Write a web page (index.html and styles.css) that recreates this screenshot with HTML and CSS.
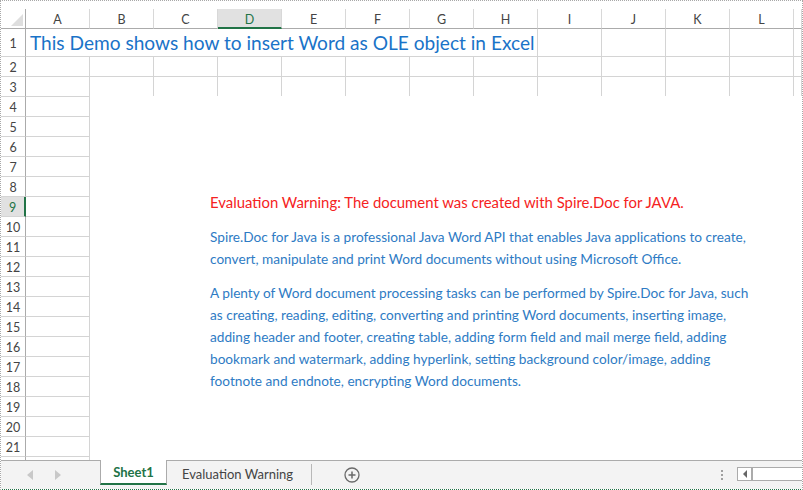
FILE: index.html
```html
<!DOCTYPE html>
<html>
<head>
<meta charset="utf-8">
<link rel="stylesheet" href="styles.css">
</head>
<body>
<div class="window">
  <div class="sheet">
    <div class="grid">
      <div class="corner"><span class="tri"></span></div>
      <div class="ch">A</div><div class="ch">B</div><div class="ch">C</div><div class="ch sel">D</div>
      <div class="ch">E</div><div class="ch">F</div><div class="ch">G</div><div class="ch">H</div>
      <div class="ch">I</div><div class="ch">J</div><div class="ch">K</div><div class="ch">L</div><div class="ch"></div>

      <div class="rh r1">1</div>
      <div class="c r1 title">This Demo shows how to insert Word as OLE object in Excel</div>
      <div class="c r1"></div><div class="c r1"></div><div class="c r1"></div><div class="c r1"></div><div class="c r1"></div>
    </div>
    <div class="grid rows" id="rows"></div>

    <div class="ole">
      <p class="warn">Evaluation Warning: The document was created with Spire.Doc for JAVA.</p>
      <p>Spire.Doc for Java is a professional Java Word API that enables Java applications to create,<br>convert, manipulate and print Word documents without using Microsoft Office.</p>
      <p>A plenty of Word document processing tasks can be performed by Spire.Doc for Java, such<br>as creating, reading, editing, converting and printing Word documents, inserting image,<br>adding header and footer, creating table, adding form field and mail merge field, adding<br>bookmark and watermark, adding hyperlink, setting background color/image, adding<br>footnote and endnote, encrypting Word documents.</p>
    </div>
  </div>

  <div class="tabbar">
    <div class="nav">
      <span class="arrow left"></span>
      <span class="arrow right"></span>
    </div>
    <div class="tab active">Sheet1</div>
    <div class="tab">Evaluation Warning</div>
    <div class="sep"></div>
    <div class="add">
      <svg width="16" height="16" viewBox="0 0 16 16"><circle cx="8" cy="8" r="7" fill="none" stroke="#6a6a6a" stroke-width="1.3"/><path d="M8 4.5v7M4.5 8h7" stroke="#6a6a6a" stroke-width="1.5"/></svg>
    </div>
    <div class="spacer"></div>
    <div class="dots"><i></i><i></i><i></i></div>
    <div class="hscroll">
      <div class="sbtn"><span class="sarrow"></span></div>
      <div class="track"></div>
    </div>
  </div>
</div>
<script src="app.js"></script>
</body>
</html>
```

FILE: app.js
```js
(function () {
  var rows = document.getElementById('rows');
  var html = '';
  for (var r = 2; r <= 22; r++) {
    html += '<div class="rh' + (r === 9 ? ' sel' : '') + '">' + (r === 22 ? '' : r) + '</div>';
    for (var c = 0; c < 13; c++) html += '<div class="c"></div>';
  }
  rows.innerHTML = html;
})();
```

FILE: styles.css
```css
* { box-sizing: border-box; }
html, body { margin: 0; padding: 0; background: #fff; }
body { font-family: Lato, "Open Sans", sans-serif; }

.window {
  width: 803px;
  height: 490px;
  border: 1px dotted #a8a8a8;
  border-bottom: 1px dotted #217346;
  display: flex;
  flex-direction: column;
  overflow: hidden;
}

.sheet {
  position: relative;
  height: 459px;
  padding-top: 8px;
  overflow: hidden;
  flex: none;
}

.grid {
  display: grid;
  grid-template-columns: 25px repeat(12, 64px) 1fr;
}
.grid.rows { grid-auto-rows: 20px; }

.corner {
  height: 20px;
  border-right: 1px solid #ababab;
  border-bottom: 1px solid #ababab;
  display: flex;
  justify-content: flex-end;
  align-items: flex-end;
  padding: 0 2px 2px 0;
}
.tri {
  width: 0; height: 0;
  border-left: 12px solid transparent;
  border-bottom: 12px solid #dedede;
}

.ch {
  height: 20px;
  border-right: 1px solid #d8d8d8;
  border-bottom: 1px solid #ababab;
  font-size: 12.5px;
  color: #444;
  display: flex;
  align-items: center;
  justify-content: center;
  padding-top: 1px;
}
.ch.sel {
  background: #e1e1e1;
  border-bottom: 2px solid #217346;
  color: #217346;
  padding-top: 2px;
}

.rh {
  border-right: 1px solid #ababab;
  border-bottom: 1px solid #d4d4d4;
  font-size: 12.5px;
  color: #444;
  display: flex;
  align-items: center;
  justify-content: center;
  padding-top: 1px;
}
.rh.sel {
  background: #e1e1e1;
  border-right: 2px solid #217346;
  color: #217346;
}
.rh.r1, .c.r1 { height: 28px; }

.c {
  border-right: 1px solid #d4d4d4;
  border-bottom: 1px solid #d4d4d4;
}
.c.title {
  grid-column: span 8;
  font-size: 19.1px;
  color: #1a73c8;
  white-space: nowrap;
  padding: 2px 0 0 4px;
  line-height: 24px;
}

.ole {
  position: absolute;
  left: 89px;
  top: 95px;
  right: 0;
  bottom: 0;
  background: #fff;
  padding: 96px 0 0 120px;
  font-size: 13.65px;
  line-height: 22px;
  color: #2e7bc4;
  white-space: nowrap;
}
.ole p { margin: 0 0 12px 0; }
.ole p.warn {
  color: #f52222;
  font-size: 14.9px;
  line-height: 20px;
  margin-bottom: 14px;
}

.tabbar {
  height: 29px;
  flex: none;
  display: flex;
  align-items: stretch;
  background: #f3f3f3;
  border-top: 1px solid #ababab;
  font-size: 13px;
}
.nav {
  width: 99px;
  display: flex;
  align-items: center;
  padding-left: 26px;
  gap: 22px;
}
.arrow {
  width: 0; height: 0;
  border-top: 5px solid transparent;
  border-bottom: 5px solid transparent;
}
.arrow.left { border-right: 6px solid #c8c8c8; }
.arrow.right { border-left: 6px solid #c8c8c8; }

.tab {
  display: flex;
  align-items: center;
  padding: 0 18px 2px 15px;
  color: #444;
}
.tab.active {
  margin-top: -1px;
  height: 25px;
  width: 67px;
  padding: 0;
  justify-content: center;
  background: #fff;
  border-left: 1px solid #ababab;
  border-right: 1px solid #ababab;
  border-bottom: 2px solid #217346;
  color: #217346;
  font-weight: bold;
}
.sep {
  width: 1px;
  background: #b8b8b8;
  margin: 3px 0 4px 0;
}
.add {
  display: flex;
  align-items: center;
  padding-left: 32px;
  padding-bottom: 1px;
}
.add svg { display: block; }
.spacer { flex: 1; }
.dots {
  display: flex;
  flex-direction: column;
  justify-content: center;
  gap: 2px;
  margin-right: 14px;
}
.dots i {
  display: block;
  width: 2px;
  height: 2px;
  background: #a0a0a0;
}
.hscroll {
  width: 65px;
  height: 14px;
  align-self: center;
  margin-top: -2px;
  border: 1px solid #ababab;
  border-right: none;
  background: #fff;
  display: flex;
}
.sbtn {
  width: 15px;
  border-right: 2px solid #ababab;
  display: flex;
  align-items: center;
  justify-content: center;
  background: #fff;
}
.sarrow {
  width: 0; height: 0;
  border-top: 4px solid transparent;
  border-bottom: 4px solid transparent;
  border-right: 4px solid #666;
}
.track { flex: 1; }
```
